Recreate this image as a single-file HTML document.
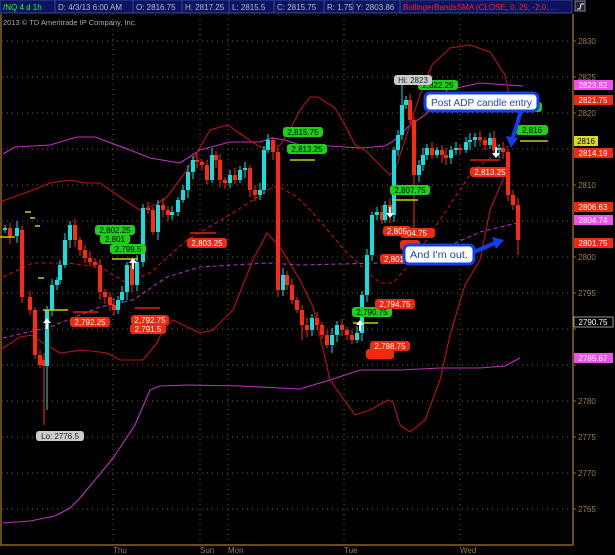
<!DOCTYPE html>
<html><head><meta charset="utf-8"><style>
body{margin:0;background:#000;width:615px;height:555px;overflow:hidden;font-family:"Liberation Sans",sans-serif}
svg{display:block}
</style></head><body>
<svg id="s" width="615" height="555" xmlns="http://www.w3.org/2000/svg" font-family="Liberation Sans, sans-serif">
<rect width="615" height="555" fill="#000"/>
<g id="grid" stroke="#7a5a20" stroke-width="1" stroke-dasharray="1,4"></g>
<line x1="1" y1="14" x2="1" y2="545" stroke="#8a6420" stroke-width="1.5"/>
<line x1="573" y1="14" x2="573" y2="545" stroke="#8a6420" stroke-width="1.5"/>
<line x1="0" y1="545" x2="573" y2="545" stroke="#8a6420" stroke-width="1.5"/>
<rect x="0" y="0" width="572" height="13" fill="#0a1460" stroke="#3a4a90"/>
<g fill="#bbb" font-size="8" textLength="">
<text x="3" y="10" fill="#2f2">/NQ 4 d 1h</text>
<text x="58" y="10">D: 4/3/13 6:00 AM</text>
<text x="136" y="10">O: 2816.75</text>
<text x="185" y="10">H: 2817.25</text>
<text x="232" y="10">L: 2815.5</text>
<text x="277" y="10">C: 2815.75</text>
<text x="327" y="10">R: 1.75</text>
<text x="356" y="10">Y: 2803.86</text>
<text x="403" y="10" fill="#f22">BollingerBandsSMA (CLOSE, 0, 25, -2.0, ...</text>
</g>
<g stroke="#3a4a90" stroke-width="1"><line x1="55" y1="0" x2="55" y2="13"/><line x1="133" y1="0" x2="133" y2="13"/><line x1="182" y1="0" x2="182" y2="13"/><line x1="229" y1="0" x2="229" y2="13"/><line x1="274" y1="0" x2="274" y2="13"/><line x1="324" y1="0" x2="324" y2="13"/><line x1="353" y1="0" x2="353" y2="13"/><line x1="400" y1="0" x2="400" y2="13"/></g>
<rect x="575" y="1" width="10" height="10" fill="#223" stroke="#889"/>
<path d="M577 9 L580 9 L581 4 L584 4" stroke="#fff" fill="none"/>
<text x="3" y="25" fill="#aaa" font-size="7.5">2013 © TD Ameritrade IP Company, Inc.</text>
<g fill="none" stroke-width="1.1">
<polyline stroke="#c030c0" points="3,154 15,147 50,145 77,137 95,137 130,150 150,158 180,163 200,150 230,142 260,142 272,138 285,140 300,145 330,146 360,148 385,146 395,140 410,125 425,115 447,90 480,83 523,86"/>
<polyline stroke="#c030c0" points="3,523 30,521 55,516 70,508 80,498 95,480 113,458 125,440 135,425 150,390 160,386 187,385 240,386 300,389 330,380 360,370 400,370 440,368 480,368 505,366 520,358"/>
<polyline stroke="#c01010" points="0,202 33,190 50,183 70,180 85,183 100,183 120,197 140,210 155,205 167,197 187,170 210,130 228,125 245,137 260,147 270,148 280,145 290,130 300,110 310,97 318,97 335,108 345,125 355,145 365,150 375,160 385,170 390,175 395,170 405,140 420,95 432,65 450,48 470,45 490,52 505,75 512,110"/>
<polyline stroke="#c01010" points="0,350 20,337 33,335 43,343 60,353 83,350 107,353 120,360 143,360 157,343 163,330 173,320 200,333 213,330 233,310 253,260 267,233 280,247 300,280 313,307 322,345 330,380 355,415 370,410 388,400 393,402 400,425 410,432 425,420 440,380 450,335 465,285 480,260 490,210 507,170"/>
<polyline stroke="#c01010" stroke-dasharray="4,3" points="3,277 33,263 67,263 100,267 127,283 150,273 187,240 233,213 273,187 280,187 297,197 313,213 347,253 380,283 393,283 413,260 440,220 473,170 510,145"/>
<polyline stroke="#b030c0" stroke-dasharray="4,3" points="3,338 50,327 100,307 133,300 167,277 200,267 267,263 300,265 380,263 440,250 480,232 517,223"/>
</g>
<g id="c"></g>
<g stroke="#cccc00" stroke-width="1.5">
<line x1="0" y1="237" x2="15" y2="237"/><line x1="43" y1="310" x2="68" y2="310"/><line x1="112" y1="259" x2="138" y2="259"/>
<line x1="290" y1="160" x2="315" y2="160"/><line x1="353" y1="323" x2="378" y2="323"/><line x1="392" y1="200" x2="418" y2="200"/><line x1="520" y1="141" x2="548" y2="141"/>
<line x1="25" y1="212" x2="31" y2="212"/><line x1="30" y1="218" x2="35" y2="218"/><line x1="35" y1="226" x2="40" y2="226"/><line x1="38" y1="278" x2="44" y2="278"/>
</g>
<g stroke="#e02010" stroke-width="1.5">
<line x1="73" y1="312" x2="98" y2="312"/><line x1="135" y1="308" x2="160" y2="308"/><line x1="190" y1="233" x2="216" y2="233"/><line x1="470" y1="160" x2="500" y2="160"/>
</g>
<g fill="#fff"><path d="M47 318 l-4 5 h3 v6 h2 v-6 h3z"/><path d="M133 258 l-4 5 h3 v6 h2 v-6 h3z"/><path d="M360 320 l-4 5 h3 v6 h2 v-6 h3z"/>
<path d="M390 218 l-4 -5 h3 v-6 h2 v6 h3z"/><path d="M496 158 l-4 -5 h3 v-6 h2 v6 h3z"/></g>
<g font-size="8" text-anchor="middle">
<g fill="#1ad01a"><rect x="95" y="225" width="40" height="10" rx="3"/><rect x="283" y="127" width="40" height="10" rx="3"/><rect x="287" y="144" width="40" height="10" rx="3"/><rect x="110" y="244" width="36" height="10" rx="3"/><rect x="390" y="185" width="40" height="10" rx="3"/><rect x="352" y="307" width="40" height="10" rx="3"/><rect x="418" y="80" width="40" height="10" rx="3"/><rect x="516" y="125" width="32" height="10" rx="3"/><rect x="520" y="102" width="22" height="10" rx="3"/><rect x="100" y="234" width="30" height="10" rx="3"/></g>
<g fill="#000"><text x="115" y="233">2,802.25</text><text x="303" y="135">2,815.75</text><text x="307" y="152">2,813.25</text><text x="128" y="252">2,799.5</text><text x="410" y="193">2,807.75</text><text x="372" y="315">2,790.75</text><text x="438" y="88">2,822.25</text><text x="532" y="133">2,816</text><text x="115" y="242">2,801</text></g>
<g fill="#ee2a10"><rect x="70" y="317" width="40" height="10" rx="3"/><rect x="131" y="315" width="38" height="10" rx="3"/><rect x="130" y="324" width="36" height="10" rx="3"/><rect x="187" y="238" width="40" height="10" rx="3"/><rect x="470" y="167" width="40" height="10" rx="3"/><rect x="375" y="299" width="40" height="10" rx="3"/><rect x="370" y="341" width="40" height="10" rx="3"/><rect x="366" y="349" width="28" height="10" rx="3"/><rect x="400" y="228" width="35" height="10" rx="3"/><rect x="383" y="226" width="28" height="10" rx="3"/><rect x="380" y="254" width="28" height="10" rx="3"/><rect x="400" y="240" width="20" height="10" rx="3"/></g>
<g fill="#fff"><text x="90" y="325">2,792.25</text><text x="150" y="323">2,792.75</text><text x="148" y="332">2,791.5</text><text x="207" y="246">2,803.25</text><text x="490" y="175">2,813.25</text><text x="395" y="307">2,794.75</text><text x="390" y="349">2,788.75</text><text x="417" y="236">04.75</text><text x="397" y="234">2,805</text><text x="394" y="262">2,801</text></g>
<rect x="394" y="75" width="38" height="10" rx="3" fill="#ccc"/><text x="413" y="83" fill="#222">Hi: 2823</text>
<rect x="36" y="431" width="48" height="10" rx="3" fill="#ccc"/><text x="60" y="439" fill="#222">Lo: 2776.5</text>
</g>
<g font-size="10.5">
<rect x="425" y="93" width="113" height="18" rx="5" fill="#fff" stroke="#1040ee" stroke-width="3"/>
<text x="431" y="106" fill="#2244cc" textLength="101" lengthAdjust="spacingAndGlyphs">Post ADP candle entry</text>
<path d="M521 111 L512 140" stroke="#1040ee" stroke-width="4"/><path d="M506 136 L511 148 L518 138z" fill="#1040ee"/>
<rect x="404" y="245" width="70" height="19" rx="5" fill="#fff" stroke="#1040ee" stroke-width="3"/>
<text x="410" y="258" fill="#2244cc" textLength="58" lengthAdjust="spacingAndGlyphs">And I'm out.</text>
<path d="M474 252 L495 243" stroke="#1040ee" stroke-width="4"/><path d="M492 237 L504 240 L496 249z" fill="#1040ee"/>
</g>
<g id="ax" font-size="8" fill="#9a8040"></g>
<g font-size="8" text-anchor="middle">
<rect x="574" y="80" width="39" height="10" fill="#f050f0"/><text x="593" y="88" fill="#fff">2823.82</text>
<rect x="574" y="95" width="39" height="10" fill="#ee2a10"/><text x="593" y="103" fill="#fff">2821.75</text>
<rect x="574" y="136" width="24" height="10" fill="#dddd10"/><text x="586" y="144" fill="#000">2816</text>
<rect x="574" y="148" width="39" height="10" fill="#ee2a10"/><text x="593" y="156" fill="#fff">2814.19</text>
<rect x="574" y="202" width="39" height="10" fill="#ee2a10"/><text x="593" y="210" fill="#fff">2806.63</text>
<rect x="574" y="215" width="39" height="10" fill="#f050f0"/><text x="593" y="223" fill="#fff">2804.74</text>
<rect x="574" y="238" width="39" height="10" fill="#ee2a10"/><text x="593" y="246" fill="#fff">2801.75</text>
<rect x="574" y="317" width="39" height="10" fill="#000" stroke="#fff" stroke-width=".6"/><text x="593" y="325" fill="#fff">2790.75</text>
<rect x="574" y="353" width="39" height="10" fill="#f050f0"/><text x="593" y="361" fill="#fff">2785.67</text>
</g>
<g font-size="8" fill="#9a8040"><text x="113" y="553">Thu</text><text x="200" y="553">Sun</text><text x="228" y="553">Mon</text><text x="344" y="553">Tue</text><text x="460" y="553">Wed</text></g>
</svg>
<script>
var NS="http://www.w3.org/2000/svg";
function el(p,t,a){var e=document.createElementNS(NS,t);for(var k in a)e.setAttribute(k,a[k]);p.appendChild(e);return e;}
var g=document.getElementById('grid'),ax=document.getElementById('ax');
for(var p=2830;p>=2765;p-=5){var y=41+(2830-p)*7.2;el(g,'line',{x1:2,y1:y,x2:572,y2:y});
var skip={2815:1,2805:1,2790:1,2785:1};
if(!skip[p]){var t=el(ax,'text',{x:578,y:y+3});t.textContent=p;}
el(ax,'line',{x1:573,y1:y,x2:576,y2:y,stroke:'#8a6420'});}
[113,200,228,344,460].forEach(function(x){el(g,'line',{x1:x,y1:14,x2:x,y2:545});});
var d=[[5,230,228],[10,228,236],[17,236,228],[22,230,297],[30,297,310],[35,310,355],[40,355,365],[44,360,366],[47,366,310],[52,310,285],[57,285,280],[60,280,265],[65,265,240],[70,240,225],[75,225,240],[80,240,250],[85,250,258],[90,258,262],[95,262,265],[100,265,292],[105,292,297],[110,297,305],[114,305,310],[118,310,300],[122,300,292],[127,292,265],[132,265,285],[137,285,262],[143,262,208],[148,208,210],[153,210,232],[158,232,205],[163,205,210],[168,210,215],[172,215,212],[178,212,200],[183,200,190],[188,190,172],[193,172,160],[197,160,162],[202,162,165],[207,165,180],[212,180,155],[216,155,160],[220,160,180],[225,180,183],[230,183,175],[235,175,180],[240,180,170],[245,170,168],[250,168,190],[255,190,195],[260,195,190],[264,190,150],[268,150,140],[273,140,152],[278,152,290],[283,290,275],[287,275,285],[292,285,300],[297,300,310],[302,310,325],[307,325,330],[312,330,318],[317,318,325],[322,325,335],[327,335,345],[332,345,335],[337,335,325],[342,325,330],[347,330,335],[352,335,340],[357,340,333],[362,333,295],[367,295,255],[372,255,215],[377,215,212],[382,212,220],[385,220,205],[390,205,215],[394,215,150],[398,150,135],[402,135,105],[406,105,100],[410,100,120],[414,120,175],[419,175,165],[423,165,155],[427,155,148],[432,148,155],[437,155,150],[442,150,155],[446,155,158],[451,158,150],[456,150,148],[460,148,150],[466,150,142],[470,142,140],[475,140,137],[480,137,140],[485,140,145],[490,145,138],[494,138,150],[499,150,148],[503,148,152],[508,152,195],[513,195,205],[518,205,240]];
var c=document.getElementById('c');
d.forEach(function(a,i){var x=a[0],o=a[1],cl=a[2];var up=cl<o;var col=up?'#10e0e0':'#ff2a10';
var hi=Math.min(o,cl)-3-(i*7%5),lo=Math.max(o,cl)+3+(i*11%6);
if(x==44)lo=425;if(x==47)lo=410;if(x==414)lo=230;if(x==518)lo=255;if(x==302)lo=340;if(x==402)hi=85;
el(c,'line',{x1:x,y1:hi,x2:x,y2:lo,stroke:col,'stroke-width':1});
el(c,'rect',{x:x-2,y:Math.min(o,cl),width:4,height:Math.max(1.5,Math.abs(o-cl)),fill:col});});
</script>
</body></html>
